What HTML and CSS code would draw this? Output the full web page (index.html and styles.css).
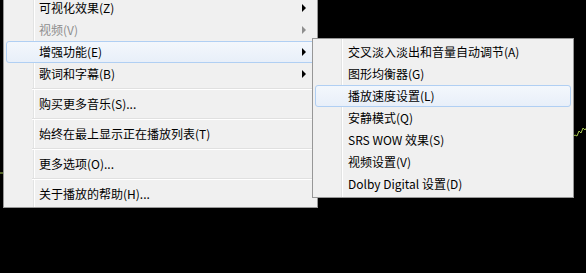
FILE: index.html
```html
<!DOCTYPE html>
<html>
<head>
<meta charset="utf-8">
<link rel="stylesheet" href="styles.css">
</head>
<body>
<div class="stage">
  <svg class="wave wave-right" width="16" height="14" viewBox="0 0 16 14"><polyline points="0,12 3,10 5,11 7,6 9,8 11,3 13,5 16,1" fill="none" stroke="#a8c850" stroke-width="1"/></svg>
  <svg class="wave wave-left" width="4" height="4" viewBox="0 0 4 4"><polyline points="0,2 4,2" fill="none" stroke="#a8c850" stroke-width="1"/></svg>

  <div class="menu main-menu">
    <div class="item"><span class="label">可视化效果(Z)</span><span class="arrow"></span></div>
    <div class="item disabled"><span class="label">视频(V)</span><span class="arrow"></span></div>
    <div class="item hot"><span class="label">增强功能(E)</span><span class="arrow"></span></div>
    <div class="item"><span class="label">歌词和字幕(B)</span><span class="arrow"></span></div>
    <div class="sep"></div>
    <div class="item"><span class="label">购买更多音乐(S)...</span></div>
    <div class="sep"></div>
    <div class="item"><span class="label">始终在最上显示正在播放列表(T)</span></div>
    <div class="sep"></div>
    <div class="item"><span class="label">更多选项(O)...</span></div>
    <div class="sep"></div>
    <div class="item"><span class="label">关于播放的帮助(H)...</span></div>
  </div>

  <div class="menu sub-menu">
    <div class="item"><span class="label">交叉淡入淡出和音量自动调节(A)</span></div>
    <div class="item"><span class="label">图形均衡器(G)</span></div>
    <div class="item hot"><span class="label">播放速度设置(L)</span></div>
    <div class="item"><span class="label">安静模式(Q)</span></div>
    <div class="item"><span class="label">SRS WOW 效果(S)</span></div>
    <div class="item"><span class="label">视频设置(V)</span></div>
    <div class="item"><span class="label">Dolby Digital 设置(D)</span></div>
  </div>
</div>
</body>
</html>
```
FILE: styles.css
```css
html, body {
  margin: 0;
  padding: 0;
  background: #000;
}
.stage {
  position: relative;
  width: 586px;
  height: 273px;
  overflow: hidden;
  background: #000;
  font-family: "Noto Sans CJK SC", "Microsoft YaHei", sans-serif;
  font-size: 12px;
  color: #000;
}
.wave {
  position: absolute;
  display: block;
}
.wave-right {
  left: 572px;
  top: 125px;
}
.wave-left {
  left: 0;
  top: 171px;
}
.menu {
  position: absolute;
  box-sizing: border-box;
  border: 1px solid #979797;
  padding: 2px;
  display: flex;
  flex-direction: column;
  background: #f0f0f0;
}
.main-menu {
  left: 3px;
  top: -6px;
  width: 315px;
  background: linear-gradient(to right, transparent 29px, #e2e3e3 29px, #e2e3e3 30px, #ffffff 30px, #ffffff 31px, transparent 31px), #f0f0f0;
}
.sub-menu {
  left: 312px;
  top: 38px;
  width: 262px;
  background: linear-gradient(to right, transparent 28px, #e2e3e3 28px, #e2e3e3 29px, #ffffff 29px, #ffffff 30px, transparent 30px), #f0f0f0;
}
.item {
  box-sizing: border-box;
  height: 22px;
  display: flex;
  align-items: center;
  padding-left: 32px;
  padding-right: 8px;
  border: 1px solid transparent;
  border-radius: 3px;
  line-height: 20px;
  white-space: nowrap;
}
.item .label {
  flex: 1;
}
.item.hot {
  border-color: #b0cff3;
  background: linear-gradient(to bottom, #f3f7fc, #e8eff9);
}
.item.disabled {
  color: #8e8e8e;
}
.arrow {
  width: 0;
  height: 0;
  border-top: 4px solid transparent;
  border-bottom: 4px solid transparent;
  border-left: 4px solid #000;
}
.item.disabled .arrow {
  border-left-color: #8e8e8e;
}
.sep {
  height: 8px;
  margin-left: 26px;
  background: linear-gradient(to bottom, transparent 3px, #e0e0e0 3px, #e0e0e0 4px, #ffffff 4px, #ffffff 5px, transparent 5px);
}
```
